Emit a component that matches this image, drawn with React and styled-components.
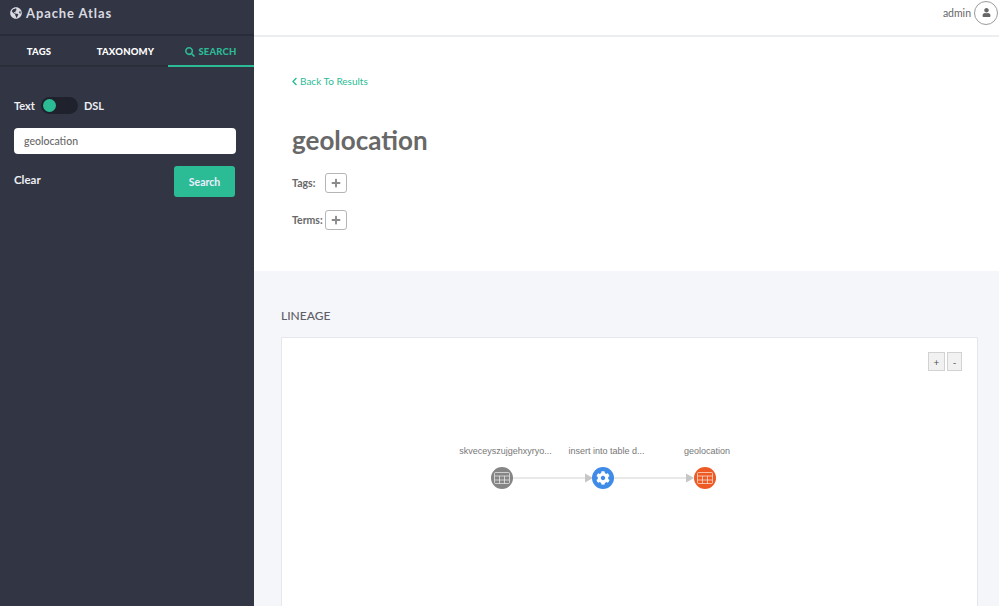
import React from 'react';
import styled, { createGlobalStyle } from 'styled-components';
import { FaGlobeAmericas, FaSearch, FaChevronLeft, FaPlus, FaUser, FaCog } from 'react-icons/fa';

const GlobalStyle = createGlobalStyle`
    html, body {
        margin: 0;
        padding: 0;
        height: 100%;
        overflow: hidden;
        font-family: Lato, "Open Sans", sans-serif;
    }
    * { box-sizing: border-box; }
`;

const Page = styled.div`
    display: flex;
    width: 999px;
    height: 606px;
    overflow: hidden;
    background: #fff;
`;

const Sidebar = styled.aside`
    width: 254px;
    flex: none;
    background: #323544;
    color: #fff;
`;

const Brand = styled.div`
    height: 36px;
    display: flex;
    align-items: center;
    gap: 4px;
    padding: 0 0 8px 10px;
    color: #d9dae0;
    font-size: 13px;
    font-weight: 700;
    letter-spacing: 0.9px;
    border-bottom: 2px solid #282b38;
`;

const Tabs = styled.div`
    display: flex;
    height: 31px;
    border-bottom: 2px solid #2a2d3a;
`;

const Tab = styled.div`
    width: ${p => p.$width}px;
    height: 31px;
    display: flex;
    align-items: center;
    justify-content: center;
    gap: 3px;
    padding-top: 2px;
    padding-left: ${p => p.$shift || 0}px;
    font-size: 9.5px;
    font-weight: 900;
    letter-spacing: 0.2px;
    color: ${p => (p.$active ? '#2bbb95' : '#fff')};
    border-bottom: 2px solid ${p => (p.$active ? '#2bbb95' : 'transparent')};
`;

const SearchForm = styled.div`
    padding: 30px 18px 0 14px;
    display: flex;
    flex-direction: column;
`;

const ToggleRow = styled.div`
    display: flex;
    align-items: center;
    gap: 6px;
    font-size: 11px;
    font-weight: 700;
    color: #eceef2;
`;

const ToggleTrack = styled.div`
    width: 37px;
    height: 17px;
    border-radius: 9px;
    background: #1f212d;
    padding: 2px;
`;

const ToggleKnob = styled.div`
    width: 13px;
    height: 13px;
    border-radius: 50%;
    background: #2bbb95;
`;

const SearchInput = styled.div`
    margin-top: 14px;
    height: 26px;
    width: 222px;
    padding-left: 10px;
    display: flex;
    align-items: center;
    background: #fff;
    border-radius: 4px;
    color: #686868;
    font-size: 10.5px;
    font-weight: 500;
`;

const Actions = styled.div`
    margin-top: 12px;
    display: flex;
    justify-content: space-between;
    align-items: flex-start;
`;

const ClearLink = styled.span`
    margin-top: 7px;
    font-size: 11.5px;
    font-weight: 700;
    color: #eceef2;
`;

const SearchButton = styled.div`
    width: 61px;
    height: 31px;
    margin-right: 1px;
    display: flex;
    align-items: center;
    justify-content: center;
    background: #2bbb95;
    border-radius: 3px;
    font-size: 10.5px;
    font-weight: 700;
    color: #eef;
`;

const Main = styled.main`
    flex: 1;
    min-width: 0;
    display: flex;
    flex-direction: column;
`;

const TopBar = styled.header`
    height: 37px;
    flex: none;
    display: flex;
    justify-content: flex-end;
    align-items: center;
    gap: 3px;
    padding: 0 1px 10px 0;
    border-bottom: 2px solid #eceef2;
    font-size: 10.5px;
    color: #666;
`;

const Avatar = styled.div`
    width: 24px;
    height: 24px;
    display: flex;
    align-items: center;
    justify-content: center;
    border: 1px solid #9a9a9a;
    border-radius: 50%;
    color: #666;
    font-size: 9px;
`;

const Details = styled.section`
    height: 234px;
    flex: none;
    padding: 37px 0 0 38px;
`;

const BackLink = styled.div`
    display: flex;
    align-items: center;
    gap: 1px;
    height: 14px;
    margin-left: -2px;
    font-size: 10px;
    color: #2bbb95;
`;

const Title = styled.h1`
    margin: 36px 0 0;
    font-size: 26px;
    line-height: 32px;
    font-weight: 700;
    color: #686868;
`;

const MetaRow = styled.div`
    display: flex;
    align-items: center;
    margin-top: ${p => p.$top}px;
    font-size: 10.5px;
    font-weight: 700;
    color: #686868;
`;

const MetaLabel = styled.span`
    width: 33px;
`;

const AddButton = styled.div`
    width: 22px;
    height: 20px;
    display: flex;
    align-items: center;
    justify-content: center;
    border: 1px solid #b5b5b5;
    border-radius: 3px;
    color: #8a8a8a;
    font-size: 10px;
`;

const LineageSection = styled.section`
    flex: 1;
    min-height: 0;
    background: #f5f6fa;
    padding: 37px 21px 0 27px;
`;

const SectionTitle = styled.h2`
    margin: 0 0 13px;
    font-size: 12px;
    line-height: 16px;
    font-weight: 500;
    color: #5e5e66;
`;

const LineageCard = styled.div`
    position: relative;
    height: 300px;
    background: #fff;
    border: 1px solid #e6e7ec;
    border-bottom: 0;
`;

const ZoomControls = styled.div`
    position: absolute;
    top: 14px;
    right: 15px;
    display: flex;
    gap: 2px;
`;

const ZoomButton = styled.div`
    width: ${p => p.$width}px;
    height: 19px;
    display: flex;
    align-items: center;
    justify-content: center;
    background: #f1f1f1;
    border: 1px solid #d2d2d2;
    color: #555;
    font-size: 10px;
`;

const GraphSvg = styled.svg`
    display: block;
    width: 696px;
    height: 268px;
`;

const NodeLabel = styled.text`
    font-family: "Liberation Sans", Arial, sans-serif;
    font-size: 9px;
    fill: #777;
    text-anchor: middle;
`;

const nodes = [
    { x: 220, labelX: 223.5, label: 'skveceyszujgehxyryo...', color: '#858585', icon: 'table' },
    { x: 321, labelX: 324.5, label: 'insert into table d...', color: '#3f8be8', icon: 'gear' },
    { x: 423, labelX: 425, label: 'geolocation', color: '#ee5a24', icon: 'table' },
];

// same little grid for both table nodes, strokes go white over the circle
const TableGlyph = ({ x }) => (
    <g fill="none" stroke="#fff" strokeOpacity="0.6" strokeWidth="1">
        <rect x={x - 7.5} y={134.5} width="15" height="11" rx="1" />
        <path d={`M${x - 7.5} 138h15M${x - 7.5} 142h15M${x - 2.5} 138v7.5M${x + 2.5} 138v7.5`} />
    </g>
);

const Arrow = ({ from, to }) => (
    <g>
        <line x1={from} y1="140" x2={to} y2="140" stroke="#e2e2e2" strokeWidth="1.5" />
        <polygon points={`${to},135.5 ${to + 8},140 ${to},144.5`} fill="#c6c6c6" />
    </g>
);

const LineageGraph = () => (
    <GraphSvg viewBox="0 0 696 268">
        <Arrow from={231} to={303} />
        <Arrow from={332} to={404} />
        {nodes.map(node => (
            <g key={node.x}>
                <NodeLabel x={node.labelX} y={116}>{node.label}</NodeLabel>
                <circle cx={node.x} cy="140" r="11" fill={node.color} />
                {node.icon === 'table'
                    ? <TableGlyph x={node.x} />
                    : <FaCog x={node.x - 7} y={133} size={14} color="#fff" />}
            </g>
        ))}
    </GraphSvg>
);

export default function App() {
    return (
        <Page>
            <GlobalStyle />
            <Sidebar>
                <Brand><FaGlobeAmericas size={12} />Apache Atlas</Brand>
                <Tabs>
                    <Tab $width={78}>TAGS</Tab>
                    <Tab $width={90} $shift={5}>TAXONOMY</Tab>
                    <Tab $width={86} $active><FaSearch size={10} />SEARCH</Tab>
                </Tabs>
                <SearchForm>
                    <ToggleRow>
                        Text
                        <ToggleTrack><ToggleKnob /></ToggleTrack>
                        DSL
                    </ToggleRow>
                    <SearchInput>geolocation</SearchInput>
                    <Actions>
                        <ClearLink>Clear</ClearLink>
                        <SearchButton>Search</SearchButton>
                    </Actions>
                </SearchForm>
            </Sidebar>
            <Main>
                <TopBar>
                    admin
                    <Avatar><FaUser /></Avatar>
                </TopBar>
                <Details>
                    <BackLink><FaChevronLeft size={9} />Back To Results</BackLink>
                    <Title>geolocation</Title>
                    <MetaRow $top={17}>
                        <MetaLabel>Tags:</MetaLabel>
                        <AddButton><FaPlus /></AddButton>
                    </MetaRow>
                    <MetaRow $top={17}>
                        <MetaLabel>Terms:</MetaLabel>
                        <AddButton><FaPlus /></AddButton>
                    </MetaRow>
                </Details>
                <LineageSection>
                    <SectionTitle>LINEAGE</SectionTitle>
                    <LineageCard>
                        <ZoomControls>
                            <ZoomButton $width={17}>+</ZoomButton>
                            <ZoomButton $width={15}>-</ZoomButton>
                        </ZoomControls>
                        <LineageGraph />
                    </LineageCard>
                </LineageSection>
            </Main>
        </Page>
    );
}
